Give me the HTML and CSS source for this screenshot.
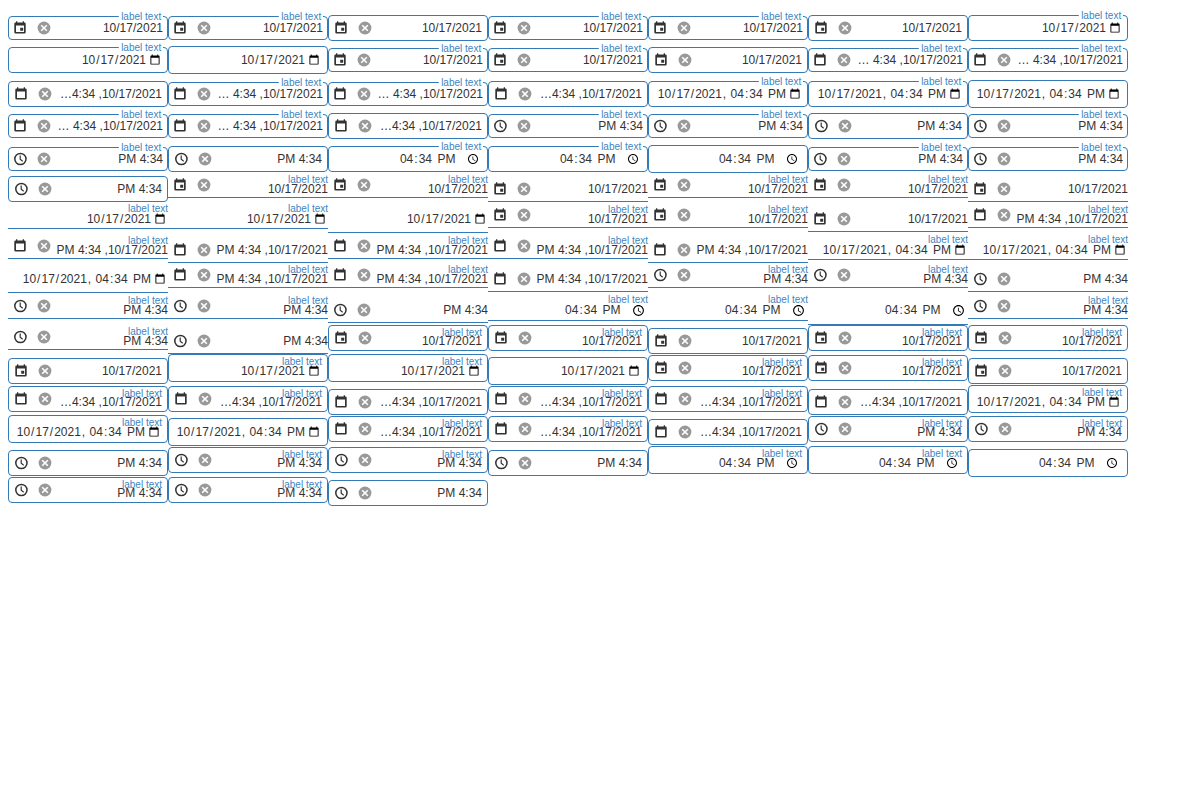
FILE: index.html
```
<!DOCTYPE html>
<html lang="en">
<head>
<meta charset="utf-8">
<title>Date and time fields</title>
<link rel="stylesheet" href="styles.css">
</head>
<body>
<svg class="sprite" aria-hidden="true">
  <symbol id="date" viewBox="0 0 16 16"><path fill-rule="evenodd" d="M4 1.300h1.300v1.200h5.400V1.300H12v1.200h.5a1.200 1.200 0 0 1 1.200 1.200v8.600a1.200 1.200 0 0 1-1.200 1.200h-9a1.200 1.200 0 0 1-1.200-1.200V3.700a1.200 1.200 0 0 1 1.200-1.200H4zM4 5.500V12h8V5.500zM8.200 7.700h3v3h-3z"/></symbol>
  <symbol id="datetime" viewBox="0 0 16 16"><path fill-rule="evenodd" d="M4 1.300h1.300v1.200h5.400V1.300H12v1.200h.5a1.200 1.200 0 0 1 1.200 1.200v8.600a1.200 1.200 0 0 1-1.200 1.200h-9a1.200 1.200 0 0 1-1.200-1.200V3.700a1.200 1.200 0 0 1 1.200-1.200H4zM4 5.500V12h8V5.500z"/></symbol>
  <symbol id="time" viewBox="-.2 0 16 16"><g fill="none" stroke="#333"><circle cx="8.200" cy="8" r="5.600" stroke-width="1.500"/><path d="M8 4.600v3.700l2.500 1.900" stroke-width="1.200"/></g></symbol>
  <symbol id="clear" viewBox="0 0 16 16"><circle cx="8" cy="8" r="6.400"/><path d="M5.200 5.200l5.600 5.600M10.800 5.200l-5.600 5.600" stroke="#fff" stroke-width="1.600"/></symbol>
</svg>
<main id="fields" class="fields"></main>
<script src="fields.js"></script>
</body>
</html>
```
FILE: styles.css
```
body {
  margin: 0;
  padding: 11px 8px 0;
  background: #fff;
  color: #333;
  font: 12px/14px "Liberation Sans", Arial, sans-serif;
}
.sprite { display: none; }
.fields { width: 1120px; }
.row { display: flex; align-items: flex-start; }

.field {
  box-sizing: border-box;
  position: relative;
  flex: none;
  width: 160px;
  height: var(--height);
  margin-top: calc(17px - var(--rise));
  padding: calc(var(--rise) - 9px) 5px 0 4px;
  border: 1px solid #337ab7;
  border-radius: 4px;
}
.control { display: flex; align-items: center; height: 16px; }
.icon { flex: none; width: 16px; height: 16px; fill: #333; }
.clear { margin-left: 8px; fill: #999; }
.value { flex: 1; text-align: right; white-space: pre; }
.label {
  position: absolute;
  right: 5px;
  font-size: 12px;
  line-height: 12px;
  color: #4085bf;
  transform: scale(.8333);
  transform-origin: right top;
}

.outline { --rise: 13px; --height: 26px; }
.outline.native { --rise: 14px; --height: 28px; }
.outline.labeled { --rise: 12px; --height: 24px; padding-right: 4px; padding-left: 3px; }
.outline.labeled.native { --rise: 13px; --height: 26px; }
.outline .label { top: -5px; right: 4px; padding: 0 2px 0 2.8px; background: #fff; }

.standard { --rise: 14px; --height: 27px; padding: calc(var(--rise) - 8px) 0 0 4px; border-width: 0 0 1px; border-radius: 0; }
.standard.native { --height: 28px; }
.standard.native.time { --height: 29px; }
.standard.labeled { --height: 23px; }
.standard.labeled.native { --rise: 15px; --height: 25px; }
.standard.labeled.native.time { --height: 26px; }
.standard .label { top: 0; right: 0; }
.standard.labeled .icon { margin-bottom: 8px; }

.fill { --rise: 13px; --height: 26px; }
.fill.native { --rise: 14px; --height: 28px; }
.fill.labeled { --rise: 16px; --height: 26px; }
.fill.labeled.native { --rise: 17px; --height: 28px; }
.fill .label { top: 2px; }
.fill.labeled .icon { margin-bottom: 6px; }

.input {
  box-sizing: border-box;
  flex: 1;
  min-width: 0;
  padding: 0;
  border: 0;
  background: transparent;
  color: #333;
  font: 12px "Liberation Sans", Arial, sans-serif;
}
.input::-webkit-datetime-edit { text-align: right; padding: 0; }
.input::-webkit-datetime-edit-ampm-field { padding-left: 2px; }
.input::-webkit-calendar-picker-indicator { margin-left: 0; margin-inline-start: 0; }
.time .input::-webkit-calendar-picker-indicator { margin-left: 8px; margin-inline-start: 8px; }
.standard.time .input::-webkit-calendar-picker-indicator { width: 13px; height: 13px; margin-left: 7.5px; }
```
FILE: fields.js
```
// Each entry is a kind (d date, t date-time, m time; upper case for the
// browser's own control) followed by L for labeled or n for unlabeled.
const groups = [
  ['outline', 'dL dL dn dL dL dn DL DL Dn dL dL dn tL tL tn tL tL tn TL TL Tn tL tL tn mL mL mn mL mL mn ML ML Mn mL mL mn'],
  ['standard', 'dL dL dn dL dL dn DL DL Dn dL dL dn tL tL tn tL tL tn TL TL Tn tL tL tn mL mL mn mL mL mn ML ML Mn mL mL mn'],
  ['fill', 'dL dL dn dL dL dn DL DL Dn dL dL dn tL tL tn tL tL tn TL TL Tn tL tL tn mL mL mn mL mL mn ML ML Mn mL mL mn'],
];
const rowHeights = [32, 34, 32, 33, 30, 30, 31, 29, 31, 31, 30, 31, 30, 31, 30, 30];
const kinds = {
  d: { name: 'date', type: 'date', value: '2021-10-17' },
  t: { name: 'datetime', type: 'datetime-local', value: '2021-10-17T16:34' },
  m: { name: 'time', type: 'time', value: '16:34' },
};

function displayText(kind, look, labeled) {
  if (kind === 'd') return '10/17/2021';
  if (kind === 'm') return 'PM 4:34';
  if (look === 'standard') return 'PM 4:34 ,10/17/2021';
  return (look === 'outline' && labeled ? '… ' : '…') + '4:34 ,10/17/2021';
}

function field(look, code) {
  const key = code[0].toLowerCase();
  const native = code[0] !== key;
  const labeled = code[1] === 'L';
  const kind = kinds[key];
  const classes = ['field', look, kind.name, native && 'native', labeled && 'labeled'].filter(Boolean).join(' ');
  const control = native
    ? `<input class="input" dir="rtl" type="${kind.type}" value="${kind.value}">`
    : `<svg class="icon"><use href="#${kind.name}"/></svg><svg class="icon clear"><use href="#clear"/></svg><span class="value">${displayText(key, look, labeled)}</span>`;
  const label = labeled ? '<span class="label">label text</span>' : '';
  return `<div class="${classes}"><div class="control">${control}</div>${label}</div>`;
}

const all = groups.flatMap(([look, codes]) => codes.split(' ').map(code => field(look, code)));
document.getElementById('fields').innerHTML = rowHeights
  .map((height, i) => `<div class="row" style="height:${height}px">${all.slice(i * 7, i * 7 + 7).join('')}</div>`)
  .join('');
```
